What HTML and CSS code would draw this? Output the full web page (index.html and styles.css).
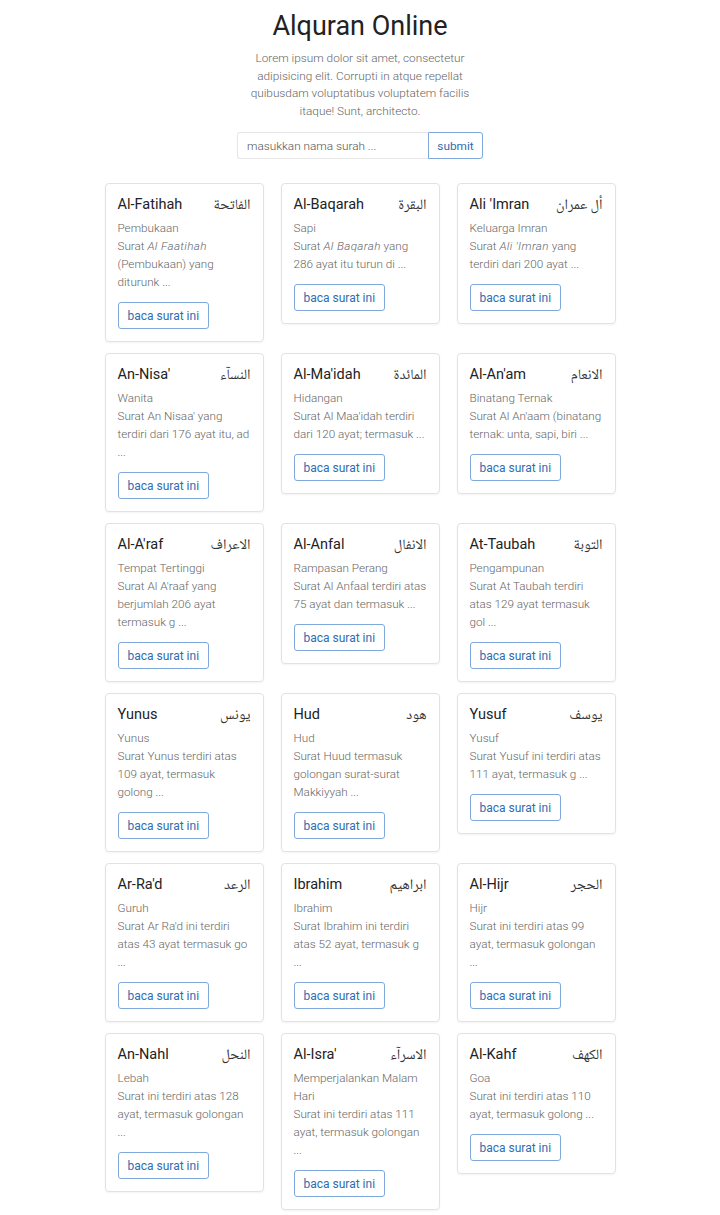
FILE: index.html
```html
<!DOCTYPE html>
<html lang="id">
<head>
<meta charset="utf-8">
<title>Alquran Online</title>
<link rel="stylesheet" href="styles.css">
</head>
<body>
<header class="hero">
  <h1 class="hero-title">Alquran Online</h1>
  <p class="hero-text">Lorem ipsum dolor sit amet, consectetur adipisicing elit. Corrupti in atque repellat quibusdam voluptatibus voluptatem facilis itaque! Sunt, architecto.</p>
  <form class="search">
    <input class="search-input" type="text" placeholder="masukkan nama surah ...">
    <button class="search-btn" type="button">submit</button>
  </form>
</header>
<main class="grid">
  <div class="card"><div class="card-head"><span class="name">Al-Fatihah</span><span class="ar" dir="rtl">الفاتحة</span></div><p class="meaning">Pembukaan</p><p class="desc">Surat <i>Al Faatihah</i> (Pembukaan) yang diturunk ...</p><a class="btn">baca surat ini</a></div>
  <div class="card"><div class="card-head"><span class="name">Al-Baqarah</span><span class="ar" dir="rtl">البقرة</span></div><p class="meaning">Sapi</p><p class="desc">Surat <i>Al Baqarah</i> yang 286 ayat itu turun di ...</p><a class="btn">baca surat ini</a></div>
  <div class="card"><div class="card-head"><span class="name">Ali 'Imran</span><span class="ar" dir="rtl">أل عمران</span></div><p class="meaning">Keluarga Imran</p><p class="desc">Surat <i>Ali 'Imran</i> yang terdiri dari 200 ayat ...</p><a class="btn">baca surat ini</a></div>

  <div class="card"><div class="card-head"><span class="name">An-Nisa'</span><span class="ar" dir="rtl">النسآء</span></div><p class="meaning">Wanita</p><p class="desc">Surat An Nisaa' yang terdiri dari 176 ayat itu, ad ...</p><a class="btn">baca surat ini</a></div>
  <div class="card"><div class="card-head"><span class="name">Al-Ma'idah</span><span class="ar" dir="rtl">المائدة</span></div><p class="meaning">Hidangan</p><p class="desc">Surat Al Maa'idah terdiri dari 120 ayat; termasuk ...</p><a class="btn">baca surat ini</a></div>
  <div class="card"><div class="card-head"><span class="name">Al-An'am</span><span class="ar" dir="rtl">الانعام</span></div><p class="meaning">Binatang Ternak</p><p class="desc">Surat Al An'aam (binatang ternak: unta, sapi, biri ...</p><a class="btn">baca surat ini</a></div>

  <div class="card"><div class="card-head"><span class="name">Al-A'raf</span><span class="ar" dir="rtl">الاعراف</span></div><p class="meaning">Tempat Tertinggi</p><p class="desc">Surat Al A'raaf yang berjumlah 206 ayat termasuk g ...</p><a class="btn">baca surat ini</a></div>
  <div class="card"><div class="card-head"><span class="name">Al-Anfal</span><span class="ar" dir="rtl">الانفال</span></div><p class="meaning">Rampasan Perang</p><p class="desc">Surat Al Anfaal terdiri atas 75 ayat dan termasuk ...</p><a class="btn">baca surat ini</a></div>
  <div class="card"><div class="card-head"><span class="name">At-Taubah</span><span class="ar" dir="rtl">التوبة</span></div><p class="meaning">Pengampunan</p><p class="desc">Surat At Taubah terdiri atas 129 ayat termasuk gol ...</p><a class="btn">baca surat ini</a></div>

  <div class="card"><div class="card-head"><span class="name">Yunus</span><span class="ar" dir="rtl">يونس</span></div><p class="meaning">Yunus</p><p class="desc">Surat Yunus terdiri atas 109 ayat, termasuk golong ...</p><a class="btn">baca surat ini</a></div>
  <div class="card"><div class="card-head"><span class="name">Hud</span><span class="ar" dir="rtl">هود</span></div><p class="meaning">Hud</p><p class="desc">Surat Huud termasuk golongan surat-surat Makkiyyah ...</p><a class="btn">baca surat ini</a></div>
  <div class="card"><div class="card-head"><span class="name">Yusuf</span><span class="ar" dir="rtl">يوسف</span></div><p class="meaning">Yusuf</p><p class="desc">Surat Yusuf ini terdiri atas 111 ayat, termasuk g ...</p><a class="btn">baca surat ini</a></div>

  <div class="card"><div class="card-head"><span class="name">Ar-Ra'd</span><span class="ar" dir="rtl">الرعد</span></div><p class="meaning">Guruh</p><p class="desc">Surat Ar Ra'd ini terdiri atas 43 ayat termasuk go ...</p><a class="btn">baca surat ini</a></div>
  <div class="card"><div class="card-head"><span class="name">Ibrahim</span><span class="ar" dir="rtl">ابراهيم</span></div><p class="meaning">Ibrahim</p><p class="desc">Surat Ibrahim ini terdiri atas 52 ayat, termasuk g ...</p><a class="btn">baca surat ini</a></div>
  <div class="card"><div class="card-head"><span class="name">Al-Hijr</span><span class="ar" dir="rtl">الحجر</span></div><p class="meaning">Hijr</p><p class="desc">Surat ini terdiri atas 99 ayat, termasuk golongan ...</p><a class="btn">baca surat ini</a></div>

  <div class="card"><div class="card-head"><span class="name">An-Nahl</span><span class="ar" dir="rtl">النحل</span></div><p class="meaning">Lebah</p><p class="desc">Surat ini terdiri atas 128 ayat, termasuk golongan ...</p><a class="btn">baca surat ini</a></div>
  <div class="card"><div class="card-head"><span class="name">Al-Isra'</span><span class="ar" dir="rtl">الاسرآء</span></div><p class="meaning">Memperjalankan Malam Hari</p><p class="desc">Surat ini terdiri atas 111 ayat, termasuk golongan ...</p><a class="btn">baca surat ini</a></div>
  <div class="card"><div class="card-head"><span class="name">Al-Kahf</span><span class="ar" dir="rtl">الكهف</span></div><p class="meaning">Goa</p><p class="desc">Surat ini terdiri atas 110 ayat, termasuk golong ...</p><a class="btn">baca surat ini</a></div>
</main>
</body>
</html>
```

FILE: styles.css
```css
* { box-sizing: border-box; }
html, body { margin: 0; padding: 0; background: #fff; }
body {
  font-family: Roboto, "Liberation Sans", sans-serif;
  color: #212529;
}
.hero {
  display: flex;
  flex-direction: column;
  align-items: center;
  padding-top: 10px;
}
.hero-title {
  margin: 0;
  font-size: 27px;
  font-weight: 400;
  line-height: 32px;
  color: #222;
}
.hero-text {
  margin: 8px 0 0;
  width: 230px;
  text-align: center;
  font-size: 11.8px;
  line-height: 17.6px;
  font-weight: 300;
  color: #666;
}
.search {
  display: flex;
  margin-top: 12px;
  width: 246px;
  height: 27px;
}
.search-input {
  flex: 1;
  min-width: 0;
  height: 27px;
  border: 1px solid #e6e6e6;
  border-right: none;
  border-radius: 3px 0 0 3px;
  padding: 0 9px;
  font-family: inherit;
  font-size: 11.8px;
  font-weight: 300;
  color: #444;
  outline: none;
}
.search-input::placeholder { color: #555; }
.search-btn {
  width: 55px;
  height: 27px;
  border: 1px solid #7fa9dc;
  border-radius: 0 3px 3px 0;
  background: #fff;
  color: #2f6db0;
  font-family: inherit;
  font-size: 11.8px;
  padding: 0;
}
.grid {
  display: grid;
  grid-template-columns: repeat(3, 159px);
  column-gap: 17px;
  row-gap: 11px;
  justify-content: center;
  align-items: start;
  margin-top: 24px;
  padding-bottom: 5px;
}
.card {
  border: 1px solid #e2e2e2;
  border-radius: 4px;
  box-shadow: 0 1px 2px rgba(0,0,0,0.05);
  padding: 11px 11px 12px 12px;
  display: flex;
  flex-direction: column;
  align-items: flex-start;
}
.card-head {
  align-self: stretch;
  display: flex;
  justify-content: space-between;
  align-items: baseline;
  height: 20px;
  margin-bottom: 4px;
  padding-right: 1px;
}
.name {
  font-size: 14.5px;
  line-height: 20px;
  color: #222;
}
.ar {
  font-family: "Noto Naskh Arabic", "DejaVu Sans", sans-serif;
  font-size: 14.5px;
  line-height: 20px;
  color: #333;
}
.meaning, .desc {
  margin: 0;
  font-size: 11.7px;
  line-height: 18px;
  font-weight: 300;
  color: #666;
}
.desc i { font-style: italic; letter-spacing: 0.35px; }
.btn {
  margin-top: 11px;
  height: 27px;
  padding: 0 9px;
  display: inline-flex;
  align-items: center;
  border: 1px solid #7fa9dc;
  border-radius: 3px;
  color: #2f6db0;
  font-size: 12px;
  cursor: pointer;
}
```
